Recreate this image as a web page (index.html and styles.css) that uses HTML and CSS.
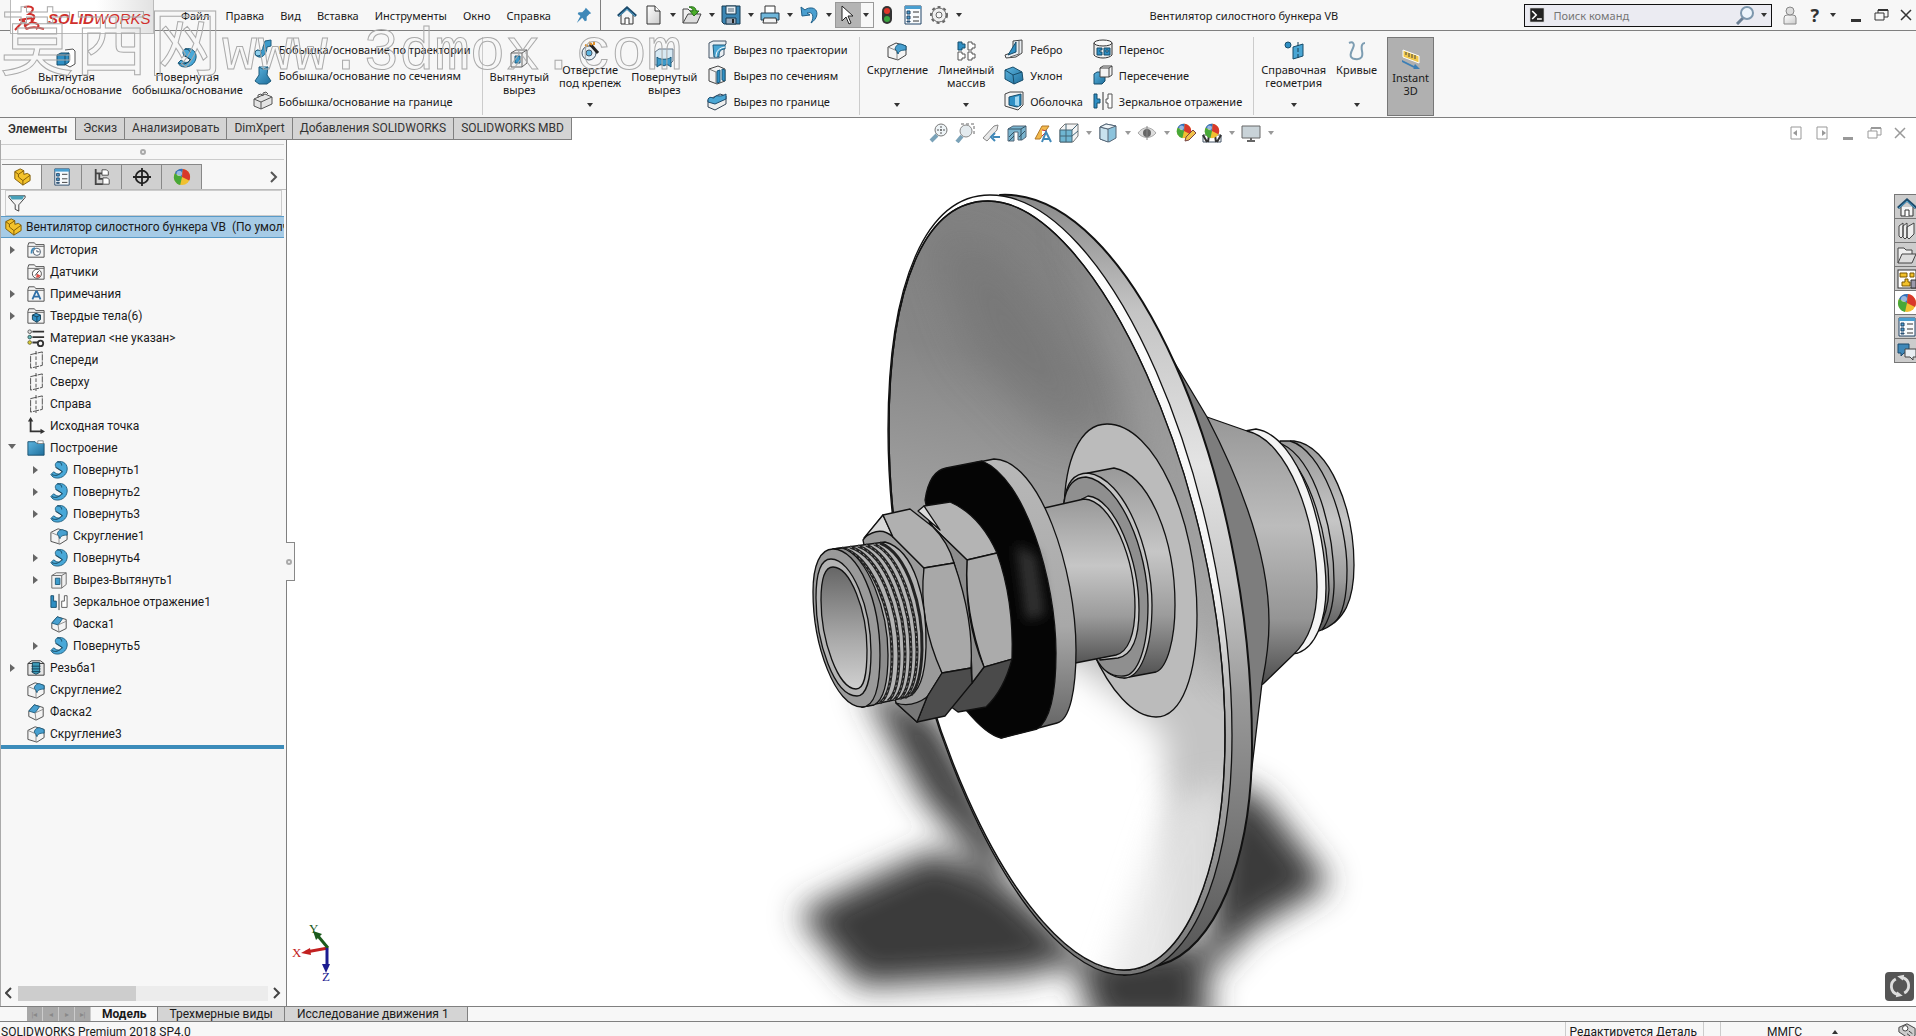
FILE: index.html
```html
<!DOCTYPE html>
<html lang="ru">
<head>
    <meta charset="UTF-8">
    <meta name="viewport" content="width=device-width, initial-scale=1.0">
    <title>Вентилятор силостного бункера VB</title>
    <link rel="stylesheet" href="styles.css">
</head>
<body>

    <!-- icon sprite -->
    <svg class="sprite" aria-hidden="true">
        <defs>
            <linearGradient id="blue" x1="0" y1="0" x2="1" y2="1"><stop offset="0" stop-color="#5db5e0"/><stop offset="1" stop-color="#1f6f9c"/></linearGradient>
            <linearGradient id="paper" x1="0" y1="0" x2="1" y2="1"><stop offset="0" stop-color="#fff"/><stop offset="1" stop-color="#ccc"/></linearGradient>
        </defs>
        <symbol id="i-extrude" viewBox="0 0 20 20"><path d="M9 2l8-1 2 2v13l-5 3-6-3" fill="#fff" stroke="#555"/><path d="M1 7l4-2h8v9l-4 3H1z" fill="#2f8fc4" stroke="#174d6b"/><path d="M1 7h8v10M9 7l4-2" fill="none" stroke="#174d6b"/></symbol>
        <symbol id="i-revolve" viewBox="0 0 20 20"><path d="M8 1c7-2 12 3 11 9-1 6-6 9-11 9-4 0-6-2-7-4l3-3 3 2c3 1 7 0 6-3l-6-4C5 5 6 2 8 1z" fill="#48a8d8" stroke="#1d5b7c"/><path d="M6 7l8 5M2 15c4 2 8 1 11-3M8 1c4 0 5 2 5 4" fill="none" stroke="#143e55"/></symbol>
        <symbol id="i-sweep" viewBox="0 0 20 20"><path d="M12 2l6-1v6l-4 1c0 6-4 11-8 10-5-1-5-6-1-7 1 2 5 1 5-3z" fill="#3d9bcb" stroke="#1d5b7c"/><circle cx="5" cy="14" r="3" fill="#8fd0ee" stroke="#1d5b7c"/></symbol>
        <symbol id="i-loft" viewBox="0 0 20 20"><path d="M6 2h9l-1 8 4 6-4 3H6l-4-3 4-6z" fill="url(#blue)" stroke="#1d5b7c"/><path d="M6 2l4 2 5-2" fill="#8fd0ee" stroke="#1d5b7c"/></symbol>
        <symbol id="i-brick" viewBox="0 0 20 20"><path d="M1 8l11-5 7 3v7L8 18l-7-3z" fill="#e4e4e4" stroke="#555"/><path d="M1 8l7 3 11-5M8 11v7M5 7V4l3-1 2 2M10 5V2l3-1 2 2" fill="none" stroke="#555"/></symbol>
        <symbol id="i-cut" viewBox="0 0 20 20"><path d="M2 5l5-3h11v13l-5 4H2z" fill="#f0f0f0" stroke="#666"/><path d="M2 5h11v14M13 5l5-3" fill="none" stroke="#666"/><path d="M6 8h5v7H6z" fill="#3d9bcb" stroke="#1d5b7c"/></symbol>
        <symbol id="i-hole" viewBox="0 0 20 20"><circle cx="9" cy="12" r="7" fill="#e4eef5" stroke="#456"/><circle cx="9" cy="12" r="3" fill="#5db5e0" stroke="#456"/><path d="M10 3l8 9" stroke="#222" stroke-width="3"/><path d="M9 1l3 3M5 4l3 1M14 1v3" stroke="#e0902a" stroke-width="2"/></symbol>
        <symbol id="i-rcut" viewBox="0 0 20 20"><path d="M1 4l4-3h14v12l-4 4H1z" fill="#d7e9f3" stroke="#678"/><path d="M3 19V9c2 3 12 3 14 0v10l-4-3-3 2-3-2z" fill="#3d9bcb" stroke="#1d5b7c"/></symbol>
        <symbol id="i-scut" viewBox="0 0 20 20"><path d="M2 4l4-2h13v3l-2 2v9l-5 3H2z" fill="#e9eef2" stroke="#456"/><path d="M6 6h12v4c-5 0-6 3-6 8H7z" fill="#4aa6d4" stroke="#1d5b7c"/><path d="M9 18c0-6 3-9 9-10" fill="none" stroke="#fff"/></symbol>
        <symbol id="i-lcut" viewBox="0 0 20 20"><path d="M2 4l9-3 7 3v12l-8 3-8-3z" fill="#f2f2f2" stroke="#444"/><path d="M2 4l7 3v12" fill="none" stroke="#777"/><path d="M10 6l3-1v12l-3 1zM15 4l3 1v11l-3-1z" fill="#2f8fc4" stroke="#1d5b7c"/></symbol>
        <symbol id="i-bcut" viewBox="0 0 20 20"><path d="M1 9l12-6 6 2v8l-11 6-7-3z" fill="#eee" stroke="#345"/><path d="M1 8c3-4 5 1 7-2s5 1 11-3v5L8 13l-7-2z" fill="#4aa6d4" stroke="#1d4b6c"/></symbol>
        <symbol id="i-fillet" viewBox="0 0 20 20"><path d="M1 6l8-4 10 3v9l-8 5-10-3z" fill="#f4f4f4" stroke="#444"/><path d="M1 6l7 3q2 1 2 4v6" fill="none" stroke="#888"/><path d="M8 8c1-4 3-5 6-5l5 2v4c-5 0-7 1-8 4q-1-4-3-5z" fill="#48a0d0" stroke="#1d5b7c"/></symbol>
        <symbol id="i-chamfer" viewBox="0 0 20 20"><path d="M2 9l6-7 10 3v10l-8 4-8-4z" fill="#f4f4f4" stroke="#444"/><path d="M2 9l6-7 6 2-5 7z" fill="#48a0d0" stroke="#1d5b7c"/><path d="M9 11l1 8M9 11l9-4" fill="none" stroke="#888"/></symbol>
        <symbol id="i-pattern" viewBox="0 0 20 20"><path d="M2 1h4v2h3v4H6v2H2z" fill="#2f8fc4" stroke="#174d6b"/><path d="M12 1h4v2h3v4h-3v2h-4zM2 11h4v2h3v4H6v2H2zM12 11h4v2h3v4h-3v2h-4z" fill="#fff" stroke="#555"/></symbol>
        <symbol id="i-rib" viewBox="0 0 20 20"><path d="M9 2l9-1v13l-6 4-10 1-1-3 8-3z" fill="#e9eef2" stroke="#444"/><path d="M12 3v10l-8 3z" fill="#2f8fc4" stroke="#174d6b"/><path d="M15 2v13l-9 3" fill="none" stroke="#666"/></symbol>
        <symbol id="i-draft" viewBox="0 0 20 20"><path d="M1 5l8-3 9 5 1 8-9 4-9-5z" fill="url(#blue)" stroke="#174d6b"/><path d="M1 5l8 5 9-3M9 10l1 9" fill="none" stroke="#174d6b"/></symbol>
        <symbol id="i-shell" viewBox="0 0 20 20"><path d="M1 3l5-2h13v13l-5 5-13-4z" fill="#f2f2f2" stroke="#444"/><path d="M5 6l12-3v11l-4 2-8-2z" fill="#2f8fc4" stroke="#174d6b"/><path d="M11 6v8l4 1V5z" fill="#9fd6f0"/></symbol>
        <symbol id="i-wrap" viewBox="0 0 20 20"><path d="M1 4v12c3 4 15 4 18 0V4" fill="#eee" stroke="#333"/><ellipse cx="10" cy="4" rx="9" ry="3" fill="#f8f8f8" stroke="#333"/><path d="M4 9h5v2H7v2h2v3H4zM11 9h6v7h-6zM13 11h2v2h-2z" fill="#2f8fc4" stroke="#174d6b" fill-rule="evenodd"/></symbol>
        <symbol id="i-cross" viewBox="0 0 20 20"><path d="M1 9l3-2h8v9l-3 3H1z" fill="url(#blue)" stroke="#174d6b"/><path d="M7 3l3-2h9v9l-3 2H7z" fill="#f4f4f4" stroke="#444"/><path d="M7 3h9v9M16 3l3-2" fill="none" stroke="#444"/></symbol>
        <symbol id="i-mirror" viewBox="0 0 20 20"><path d="M1 3h3v5h3v4H4v5H1z" fill="#2f8fc4" stroke="#174d6b"/><path d="M10 1v18" stroke="#333"/><path d="M19 3h-4v5h-2v4h2v5h4z" fill="#fff" stroke="#555"/></symbol>
        <symbol id="i-mirror2" viewBox="0 0 20 20"><path d="M1 3h3v6h3v7H1z" fill="#2f8fc4" stroke="#174d6b"/><path d="M10 1v18" stroke="#333"/><path d="M19 3h-3v6h-3v7h6z" fill="#fff" stroke="#555"/></symbol>
        <symbol id="i-refgeo" viewBox="0 0 20 20"><circle cx="4" cy="4" r="3" fill="#2f8fc4" stroke="#174d6b"/><path d="M9 6l10-3v12L9 18z" fill="#4aa6d4" stroke="#174d6b"/><path d="M14 1v18" stroke="#143e55" stroke-dasharray="4 2"/></symbol>
        <symbol id="i-curves" viewBox="0 0 20 20"><path d="M2 2c4-2 6 1 4 5s-5 10 2 11 8-3 7-8 0-8 3-8" fill="none" stroke="#7d9db2" stroke-width="2"/></symbol>
        <symbol id="i-instant" viewBox="0 0 20 20"><path d="M2 1l16 6v7L2 8z" fill="#f1c84b" stroke="#fff"/><path d="M5 3v3M8 4v4M11 5v4M14 6v4" stroke="#444"/><path d="M1 11l12 6 1-2 5 5-7 0 1-1L1 13z" fill="#3d7fb5"/></symbol>
        <symbol id="i-home" viewBox="0 0 20 20"><path d="M4 10v9h12v-9" fill="#f4f4f4" stroke="#333"/><path d="M1 11l9-8 9 8" fill="none" stroke="#1d4b6c" stroke-width="3"/><path d="M2 11l8-7 8 7" fill="none" stroke="#58a9d2"/><path d="M8 19v-6h4v6" fill="#fff" stroke="#333"/></symbol>
        <symbol id="i-new" viewBox="0 0 20 20"><path d="M4 1h8l5 5v13H4z" fill="url(#paper)" stroke="#333"/><path d="M12 1v5h5" fill="#fff" stroke="#333"/></symbol>
        <symbol id="i-open" viewBox="0 0 20 20"><path d="M1 18V4h5l2 2h7v4" fill="#f0f0f0" stroke="#444"/><path d="M1 18l5-9h13l-4 9z" fill="#ddd" stroke="#444"/><path d="M7 2c5-1 7 1 7 4h3l-5 5-4-5h3c0-2-1-3-4-4z" fill="#4caf2a" stroke="#27701a"/></symbol>
        <symbol id="i-save" viewBox="0 0 20 20"><path d="M1 1h18v18H3l-2-2z" fill="#3b86b4" stroke="#183b50"/><path d="M5 1h10v8H5z" fill="#e8f0f5" stroke="#183b50"/><path d="M7 4h6M7 6h6" stroke="#567"/><path d="M5 13h10v6H5z" fill="#9ab" stroke="#183b50"/><path d="M11 14h2v4h-2z" fill="#222"/></symbol>
        <symbol id="i-print" viewBox="0 0 20 20"><path d="M5 8V1h10v7" fill="#fff" stroke="#333"/><path d="M1 8h18v7H1z" fill="#6fb6da" stroke="#1d3b50"/><path d="M4 13h12l1 5H3z" fill="#f4f4f4" stroke="#333"/></symbol>
        <symbol id="i-undo" viewBox="0 0 20 20"><path d="M2 2l1 9 8-1-3-2c5-2 8 3 4 10 9-6 7-16-1-15-2 0-4 1-5 2z" fill="#4a9fd0" stroke="#1f5f88"/></symbol>
        <symbol id="i-cursor" viewBox="0 0 20 20"><path d="M6 1v15l4-4 3 7 2-1-3-7h5z" fill="#fff" stroke="#222"/></symbol>
        <symbol id="i-traffic" viewBox="0 0 20 20"><rect x="5" y="1" width="10" height="18" rx="5" fill="#333"/><circle cx="10" cy="6" r="3" fill="#e0342a"/><circle cx="10" cy="14" r="3" fill="#3aa640"/></symbol>
        <symbol id="i-list" viewBox="0 0 20 20"><path d="M2 1h16v18H2z" fill="#f8fbfd" stroke="#246"/><path d="M2 1h16v3H2z" fill="#4a9fd0"/><path d="M4 6h3v3H4zM4 11h3v3H4zM4 16h3v1H4z" fill="#4a9fd0" stroke="#246"/><path d="M10 7h6M10 12h6M10 16h6" stroke="#333"/></symbol>
        <symbol id="i-gear" viewBox="0 0 20 20"><circle cx="10" cy="10" r="8" fill="none" stroke="#666" stroke-width="2" stroke-dasharray="3 3"/><circle cx="10" cy="10" r="7" fill="#f0f0f0" stroke="#666"/><circle cx="10" cy="10" r="3" fill="#f7f7f7" stroke="#666"/></symbol>
        <symbol id="i-pin" viewBox="0 0 20 20"><path d="M12 2l6 6-2 1-3 3v4l-2 1-3-4-6 6 4-8-3-2 1-2h4l3-3z" fill="#3f88b8"/></symbol>
        <symbol id="i-part" viewBox="0 0 20 20"><path d="M2 4l6-3 4 2v4l4-1 3 2v6l-8 5-9-7z" fill="#f3c22b" stroke="#7a5600"/><path d="M2 4l4 3 6-4M6 7v3l5 4 8-6M11 14v5" fill="none" stroke="#7a5600"/></symbol>
        <symbol id="i-config" viewBox="0 0 20 20"><path d="M3 1v17h8M3 6h7M7 6v6h4" fill="none" stroke="#444" stroke-width="2"/><path d="M10 2h5l2 2v4h-7zM11 11h5l2 2v5h-7z" fill="#fff" stroke="#444"/></symbol>
        <symbol id="i-target" viewBox="0 0 20 20"><circle cx="10" cy="10" r="7" fill="none" stroke="#222" stroke-width="2"/><path d="M10 0v20M0 10h20" stroke="#222" stroke-width="2"/></symbol>
        <symbol id="i-ball" viewBox="0 0 20 20"><circle cx="10" cy="10" r="9" fill="#f0c030"/><path d="M10 10L2 6a9 9 0 0 1 9-5z" fill="#2f6fc0"/><path d="M10 10L11 1a9 9 0 0 1 7 13z" fill="#d8382c"/><path d="M10 10l-8-4a9 9 0 0 0 6 13z" fill="#48a838"/><circle cx="7" cy="6" r="3" fill="#fff" opacity=".5"/></symbol>
        <symbol id="i-funnel" viewBox="0 0 20 20"><path d="M1 2h18v2l-7 8v7l-4-2v-5L1 4z" fill="#f4f4f4" stroke="#333"/><path d="M2 2h16l-2 4H4z" fill="#48a0b8"/></symbol>
        <symbol id="i-folder" viewBox="0 0 20 20"><path d="M1 18V5l1-3h6l2 2h9v14z" fill="#f4f4f4" stroke="#444"/><path d="M1 6h18" stroke="#666"/></symbol>
        <symbol id="i-history" viewBox="0 0 20 20"><use href="#i-folder"/><circle cx="11" cy="12" r="4" fill="#fff" stroke="#456"/><path d="M11 10v2h3" fill="none" stroke="#456"/><path d="M5 14c0-4 2-6 4-6" fill="none" stroke="#3f88b8" stroke-width="2"/></symbol>
        <symbol id="i-sensor" viewBox="0 0 20 20"><use href="#i-folder"/><circle cx="11" cy="12" r="5" fill="#fff" stroke="#444"/><path d="M11 12l4 2-2 2-3 0z" fill="#e05048"/><path d="M9 14l4-5" stroke="#222"/></symbol>
        <symbol id="i-notes" viewBox="0 0 20 20"><use href="#i-folder"/><path d="M6 16l4-9h1l4 9M8 13h6" fill="none" stroke="#2f6fa8" stroke-width="2"/></symbol>
        <symbol id="i-bodies" viewBox="0 0 20 20"><use href="#i-folder"/><path d="M6 9l4-2 5 2v5l-4 3-5-3z" fill="#2f8fc4" stroke="#143e55"/><path d="M6 9l5 2 4-2M11 11v6" fill="none" stroke="#143e55"/></symbol>
        <symbol id="i-material" viewBox="0 0 20 20"><path d="M6 3h13M6 9h13M6 15h6" stroke="#333" stroke-width="2"/><circle cx="3" cy="3" r="2" fill="#ddd" stroke="#555"/><circle cx="3" cy="9" r="2" fill="#6bb" stroke="#355"/><circle cx="3" cy="15" r="2" fill="#dc3" stroke="#663"/><circle cx="15" cy="16" r="3" fill="none" stroke="#333" stroke-width="2"/></symbol>
        <symbol id="i-plane" viewBox="0 0 20 20"><path d="M4 4l13-3v15L4 19z" fill="none" stroke="#444" stroke-dasharray="7 1"/><path d="M10 0v20" stroke="#444" stroke-dasharray="4 2"/></symbol>
        <symbol id="i-origin" viewBox="0 0 20 20"><path d="M4 4v12h12" fill="none" stroke="#333" stroke-width="2"/><path d="M1 5l3-5 3 5zM15 13l5 3-5 3z" fill="#333"/></symbol>
        <symbol id="i-bfolder" viewBox="0 0 20 20"><path d="M1 18V3h8l2 2h8v13z" fill="url(#blue)" stroke="#174d6b"/><path d="M12 2h6v3h-6z" fill="#fff" stroke="#888"/></symbol>
        <symbol id="i-thread" viewBox="0 0 20 20"><path d="M1 5l4-3h10l4 3v13H1z" fill="#e6e6e6" stroke="#333"/><path d="M1 5h18" stroke="#333"/><path d="M6 4h8v11l-4 2-4-2z" fill="#3d9bb8" stroke="#143e55"/><path d="M5 8h10M5 11h10M5 14h10" stroke="#143e55"/></symbol>
        <symbol id="i-zoomfit" viewBox="0 0 20 20"><path d="M2 18l6-6" stroke="#7aa2b8" stroke-width="4"/><circle cx="12" cy="7" r="6" fill="#eef4f7" stroke="#777"/><path d="M12 3v8M8 7h8" stroke="#555" stroke-dasharray="2 1"/></symbol>
        <symbol id="i-zoomarea" viewBox="0 0 20 20"><path d="M6 1h13v12" fill="none" stroke="#666" stroke-dasharray="3 2"/><path d="M2 19l5-6" stroke="#7aa2b8" stroke-width="4"/><circle cx="11" cy="8" r="6" fill="#e3eaee" stroke="#888"/></symbol>
        <symbol id="i-prev" viewBox="0 0 20 20"><path d="M2 15L13 3l4-1-1 5L6 18z" fill="#e8e8e8" stroke="#888"/><path d="M19 14h-7M14 10l-4 4 4 4" fill="none" stroke="#3f88b8" stroke-width="2"/></symbol>
        <symbol id="i-section" viewBox="0 0 20 20"><path d="M1 6l5-3h13v11l-4 3h-4V9H7v9H1z" fill="#7ab5d0" stroke="#567"/><path d="M1 6h13v11M14 6l5-3" fill="none" stroke="#356"/><path d="M2 14l5-5M2 18l5-5M12 14l6-6" stroke="#356"/></symbol>
        <symbol id="i-dyn" viewBox="0 0 20 20"><path d="M2 16L9 3h7L7 16z" fill="#f3b94c" stroke="#b0792a"/><path d="M9 7l5 1-5 5" fill="#fff" stroke="#c33"/><path d="M9 19l4-10 5 10M11 16h6" fill="none" stroke="#3f88b8" stroke-width="2"/></symbol>
        <symbol id="i-orient" viewBox="0 0 20 20"><path d="M1 6l5-5h13v12l-5 6H1z" fill="#f4f4f4" stroke="#777"/><path d="M1 7h12v12H1z" fill="#6fb6d2" stroke="#467"/><path d="M13 7l6-6M7 1v18M1 13h12l6-5" fill="none" stroke="#467"/></symbol>
        <symbol id="i-style" viewBox="0 0 20 20"><path d="M2 4l6-3 10 2v12l-7 4-9-3z" fill="#8cc3dc" stroke="#567"/><path d="M2 4l8 2v13l-8-3z" fill="#c8e2ee" stroke="#567"/><path d="M2 4l6-3 10 2-8 3z" fill="#eef5f8" stroke="#567"/></symbol>
        <symbol id="i-eye" viewBox="0 0 20 20"><path d="M1 10c5-7 13-7 18 0-5 6-13 6-18 0z" fill="#ddd" stroke="#aaa"/><circle cx="10" cy="10" r="4" fill="#666"/><path d="M10 3v14" stroke="#888"/></symbol>
        <symbol id="i-appear" viewBox="0 0 20 20"><g transform="scale(.8)"><use href="#i-ball" width="20" height="20"/></g><path d="M9 18l1-4 7-7 3 3-7 7z" fill="#f0c24a" stroke="#744"/></symbol>
        <symbol id="i-scene" viewBox="0 0 20 20"><path d="M1 12h18v7H1z" fill="#fff" stroke="#456"/><path d="M1 12l4 7M7 12l-1 7M13 12l1 7M19 12l-4 7" stroke="#333" stroke-width="2"/><g transform="translate(2) scale(.8)"><use href="#i-ball" width="20" height="20"/></g></symbol>
        <symbol id="i-screen" viewBox="0 0 20 20"><path d="M1 3h18v12H1z" fill="#c9d3d8" stroke="#666"/><path d="M10 15v3M6 18h8" stroke="#666" stroke-width="2"/></symbol>
        <symbol id="i-books" viewBox="0 0 20 20"><path d="M2 5l4-3v13l-2 2-2-2zM6 5l4-3v14l-2 2-2-2zM10 6l7-4v11l-5 5-2-2z" fill="#eee" stroke="#444"/></symbol>
        <symbol id="i-dir" viewBox="0 0 20 20"><path d="M1 18V3h6l2 2h6v4" fill="#f0f0f0" stroke="#444"/><path d="M1 18l4-9h14l-4 9z" fill="#ddd" stroke="#444"/></symbol>
        <symbol id="i-palette" viewBox="0 0 20 20"><rect x="1" y="1" width="18" height="18" fill="#fff" stroke="#333"/><path d="M3 4h7v4H3zM13 4h4v4h-4zM5 13h3v-3h3v3h2v4H5z" fill="#f3c22b" stroke="#7a5600"/><path d="M14 11h5v8h-5z" fill="#99a" stroke="#333"/></symbol>
        <symbol id="i-chat" viewBox="0 0 20 20"><path d="M1 3h11v9H7l-3 3v-3H1z" fill="#3f88b8" stroke="#1d4b6c"/><path d="M8 8h11v8h-3v3l-3-3H8z" fill="#e8eef2" stroke="#444"/></symbol>
        <symbol id="i-user" viewBox="0 0 20 20"><path d="M4 19v-6q0-3 3-3h6q3 0 3 3v6z" fill="url(#paper)" stroke="#888"/><circle cx="10" cy="6" r="4" fill="#ddd" stroke="#888"/></symbol>
        <symbol id="i-prompt" viewBox="0 0 20 20"><path d="M1 1h18v18H1z" fill="#222" stroke="#fff"/><path d="M4 5l5 5-5 5M10 15h6" fill="none" stroke="#fff" stroke-width="2"/></symbol>
        <symbol id="i-mag" viewBox="0 0 20 20"><path d="M2 19l6-6" stroke="#6b7f94" stroke-width="3"/><circle cx="12" cy="8" r="6" fill="#edf4fb" stroke="#7d97ad" stroke-width="2"/></symbol>
        <symbol id="i-min" viewBox="0 0 20 20"><path d="M5 14h10v3H5z" fill="currentColor"/></symbol>
        <symbol id="i-restore" viewBox="0 0 20 20"><path d="M7 8V5h10v7h-4M4 8h9v7H4z" fill="none" stroke="currentColor" stroke-width="1"/><path d="M7 5h10" stroke="currentColor" stroke-width="2"/></symbol>
        <symbol id="i-close" viewBox="0 0 20 20"><path d="M5 5l10 10M15 5L5 15" stroke="currentColor" stroke-width="1.5"/></symbol>
        <symbol id="i-padl" viewBox="0 0 20 20"><path d="M5 4h10v12H5z" fill="none" stroke="currentColor"/><path d="M11 7v6l-4-3z" fill="currentColor"/></symbol>
        <symbol id="i-padr" viewBox="0 0 20 20"><path d="M5 4h10v12H5z" fill="none" stroke="currentColor"/><path d="M10 7v6l4-3z" fill="currentColor"/></symbol>
        <symbol id="i-rotate" viewBox="0 0 20 20"><path d="M12 4a6 6 0 0 1 1 11M8 16A6 6 0 0 1 7 5" fill="none" stroke="#ddd" stroke-width="2"/><path d="M8 3l5-1-1 4zM12 17l-5 1 1-4z" fill="#ddd"/></symbol>
        <symbol id="i-chip" viewBox="0 0 20 20"><path d="M1 6l9-4 9 5v8l-6 4-12-8z" fill="#ccc" stroke="#333"/><circle cx="8" cy="7" r="3" fill="#fff" stroke="#333"/><path d="M12 10l4 3M10 13l4 3" stroke="#333"/></symbol>
    </svg>

    <header class="titlebar">
        <a class="logo" href="#" aria-label="SOLIDWORKS">
            <svg class="logo-mark" viewBox="0 0 34 28"><path d="M10 2c9-2 12 2 5 7 9 0 6 8-5 12M1 25l9-10 2 9M5 15l13-2M12 24c6-3 12-2 18 0M21 13c-5 1-4 4 0 5s5 4 1 6" fill="none" stroke="#d0302c" stroke-width="2"/></svg>
            <b>SOLID</b><span>WORKS</span>
        </a>
        <nav class="menu">
            <a href="#">Файл</a>
            <a href="#">Правка</a>
            <a href="#">Вид</a>
            <a href="#">Вставка</a>
            <a href="#">Инструменты</a>
            <a href="#">Окно</a>
            <a href="#">Справка</a>
        </nav>
        <button class="pin" aria-label="Закрепить"><svg class="icon small"><use href="#i-pin"/></svg></button>
        <div class="quick">
            <button aria-label="Домой"><svg class="icon"><use href="#i-home"/></svg></button>
            <button aria-label="Создать"><svg class="icon"><use href="#i-new"/></svg><i class="caret"></i></button>
            <button aria-label="Открыть"><svg class="icon"><use href="#i-open"/></svg><i class="caret"></i></button>
            <button aria-label="Сохранить"><svg class="icon"><use href="#i-save"/></svg><i class="caret"></i></button>
            <button aria-label="Печать"><svg class="icon"><use href="#i-print"/></svg><i class="caret"></i></button>
            <button aria-label="Отменить"><svg class="icon"><use href="#i-undo"/></svg><i class="caret"></i></button>
            <button class="picked" aria-label="Выбрать"><svg class="icon"><use href="#i-cursor"/></svg><i class="caret"></i></button>
            <button aria-label="Перестроить"><svg class="icon"><use href="#i-traffic"/></svg></button>
            <button aria-label="Свойства файла"><svg class="icon"><use href="#i-list"/></svg></button>
            <button aria-label="Параметры"><svg class="icon"><use href="#i-gear"/></svg><i class="caret"></i></button>
        </div>
        <h1 class="doc-title">Вентилятор силостного бункера VB</h1>
        <div class="title-right">
            <label class="search">
                <svg class="icon tiny"><use href="#i-prompt"/></svg>
                <input type="text" placeholder="Поиск команд" aria-label="Поиск команд">
                <svg class="icon"><use href="#i-mag"/></svg>
                <i class="caret"></i>
            </label>
            <button aria-label="Вход"><svg class="icon"><use href="#i-user"/></svg></button>
            <button class="help" aria-label="Помощь">?<i class="caret"></i></button>
            <button aria-label="Свернуть"><svg class="icon"><use href="#i-min"/></svg></button>
            <button aria-label="Развернуть"><svg class="icon"><use href="#i-restore"/></svg></button>
            <button aria-label="Закрыть"><svg class="icon"><use href="#i-close"/></svg></button>
        </div>
    </header>

    <div class="ribbon">
        <button class="big low"><svg class="icon"><use href="#i-extrude"/></svg><span>Вытянутая<br>бобышка/основание</span></button>
        <button class="big low"><svg class="icon"><use href="#i-revolve"/></svg><span>Повернутая<br>бобышка/основание</span></button>
        <div class="stack">
            <button><svg class="icon"><use href="#i-sweep"/></svg>Бобышка/основание по траектории</button>
            <button><svg class="icon"><use href="#i-loft"/></svg>Бобышка/основание по сечениям</button>
            <button><svg class="icon"><use href="#i-brick"/></svg>Бобышка/основание на границе</button>
        </div>
        <hr>
        <button class="big low"><svg class="icon"><use href="#i-cut"/></svg><span>Вытянутый<br>вырез</span></button>
        <button class="big"><svg class="icon"><use href="#i-hole"/></svg><span>Отверстие<br>под крепеж</span><i class="caret"></i></button>
        <button class="big low"><svg class="icon"><use href="#i-rcut"/></svg><span>Повернутый<br>вырез</span></button>
        <div class="stack">
            <button><svg class="icon"><use href="#i-scut"/></svg>Вырез по траектории</button>
            <button><svg class="icon"><use href="#i-lcut"/></svg>Вырез по сечениям</button>
            <button><svg class="icon"><use href="#i-bcut"/></svg>Вырез по границе</button>
        </div>
        <hr>
        <button class="big"><svg class="icon"><use href="#i-fillet"/></svg><span>Скругление</span><i class="caret"></i></button>
        <button class="big"><svg class="icon"><use href="#i-pattern"/></svg><span>Линейный<br>массив</span><i class="caret"></i></button>
        <div class="stack">
            <button><svg class="icon"><use href="#i-rib"/></svg>Ребро</button>
            <button><svg class="icon"><use href="#i-draft"/></svg>Уклон</button>
            <button><svg class="icon"><use href="#i-shell"/></svg>Оболочка</button>
        </div>
        <div class="stack">
            <button><svg class="icon"><use href="#i-wrap"/></svg>Перенос</button>
            <button><svg class="icon"><use href="#i-cross"/></svg>Пересечение</button>
            <button><svg class="icon"><use href="#i-mirror"/></svg>Зеркальное отражение</button>
        </div>
        <hr>
        <button class="big"><svg class="icon"><use href="#i-refgeo"/></svg><span>Справочная<br>геометрия</span><i class="caret"></i></button>
        <button class="big"><svg class="icon"><use href="#i-curves"/></svg><span>Кривые</span><i class="caret"></i></button>
        <button class="big low pressed"><svg class="icon"><use href="#i-instant"/></svg><span>Instant<br>3D</span></button>
    </div>

    <main class="workspace">
        <nav class="tabs">
            <button class="active">Элементы</button>
            <button>Эскиз</button>
            <button>Анализировать</button>
            <button>DimXpert</button>
            <button>Добавления SOLIDWORKS</button>
            <button>SOLIDWORKS MBD</button>
        </nav>

        <aside class="panel">
            <div class="grip"><i class="dot"></i></div>
            <div class="panel-tabs">
                <button class="active" aria-label="Дерево конструирования"><svg class="icon small"><use href="#i-part"/></svg></button>
                <button aria-label="PropertyManager"><svg class="icon small"><use href="#i-list"/></svg></button>
                <button aria-label="ConfigurationManager"><svg class="icon small"><use href="#i-config"/></svg></button>
                <button aria-label="DimXpertManager"><svg class="icon small"><use href="#i-target"/></svg></button>
                <button aria-label="DisplayManager"><svg class="icon small"><use href="#i-ball"/></svg></button>
                <button class="more" aria-label="Ещё"><svg viewBox="0 0 8 12" width="8" height="12"><path d="M1 1l5 5-5 5" fill="none" stroke="#555" stroke-width="2"/></svg></button>
            </div>
            <label class="filter"><svg class="icon small"><use href="#i-funnel"/></svg><input type="text" aria-label="Фильтр"></label>
            <div class="root"><svg class="icon small"><use href="#i-part"/></svg>Вентилятор силостного бункера VB&nbsp; (По умолчанию)</div>
            <ul class="tree">
                <li><i class="arrow"></i><svg class="icon small"><use href="#i-history"/></svg>История</li>
                <li><i></i><svg class="icon small"><use href="#i-sensor"/></svg>Датчики</li>
                <li><i class="arrow"></i><svg class="icon small"><use href="#i-notes"/></svg>Примечания</li>
                <li><i class="arrow"></i><svg class="icon small"><use href="#i-bodies"/></svg>Твердые тела(6)</li>
                <li><i></i><svg class="icon small"><use href="#i-material"/></svg>Материал &lt;не указан&gt;</li>
                <li><i></i><svg class="icon small"><use href="#i-plane"/></svg>Спереди</li>
                <li><i></i><svg class="icon small"><use href="#i-plane"/></svg>Сверху</li>
                <li><i></i><svg class="icon small"><use href="#i-plane"/></svg>Справа</li>
                <li><i></i><svg class="icon small"><use href="#i-origin"/></svg>Исходная точка</li>
                <li><i class="arrow open"></i><svg class="icon small"><use href="#i-bfolder"/></svg>Построение</li>
                <li class="sub"><i class="arrow"></i><svg class="icon small"><use href="#i-revolve"/></svg>Повернуть1</li>
                <li class="sub"><i class="arrow"></i><svg class="icon small"><use href="#i-revolve"/></svg>Повернуть2</li>
                <li class="sub"><i class="arrow"></i><svg class="icon small"><use href="#i-revolve"/></svg>Повернуть3</li>
                <li class="sub"><i></i><svg class="icon small"><use href="#i-fillet"/></svg>Скругление1</li>
                <li class="sub"><i class="arrow"></i><svg class="icon small"><use href="#i-revolve"/></svg>Повернуть4</li>
                <li class="sub"><i class="arrow"></i><svg class="icon small"><use href="#i-cut"/></svg>Вырез-Вытянуть1</li>
                <li class="sub"><i></i><svg class="icon small"><use href="#i-mirror2"/></svg>Зеркальное отражение1</li>
                <li class="sub"><i></i><svg class="icon small"><use href="#i-chamfer"/></svg>Фаска1</li>
                <li class="sub"><i class="arrow"></i><svg class="icon small"><use href="#i-revolve"/></svg>Повернуть5</li>
                <li><i class="arrow"></i><svg class="icon small"><use href="#i-thread"/></svg>Резьба1</li>
                <li><i></i><svg class="icon small"><use href="#i-fillet"/></svg>Скругление2</li>
                <li><i></i><svg class="icon small"><use href="#i-chamfer"/></svg>Фаска2</li>
                <li><i></i><svg class="icon small"><use href="#i-fillet"/></svg>Скругление3</li>
            </ul>
            <div class="rollback"></div>
            <div class="hscroll">
                <svg viewBox="0 0 8 12" width="8" height="12"><path d="M6 1L1 6l5 5" fill="none" stroke="#444" stroke-width="2"/></svg>
                <div class="track"><div class="thumb"></div></div>
                <svg viewBox="0 0 8 12" width="8" height="12"><path d="M1 1l5 5-5 5" fill="none" stroke="#444" stroke-width="2"/></svg>
            </div>
        </aside>

        <section class="viewport">
            <svg class="model" viewBox="287 118 1629 888" role="img" aria-label="Модель вентилятора">
                <defs>
                    <linearGradient id="face" gradientUnits="userSpaceOnUse" x1="1030" y1="200" x2="940" y2="650"><stop offset="0" stop-color="#828282"/><stop offset=".35" stop-color="#868686"/><stop offset=".7" stop-color="#a0a0a0"/><stop offset="1" stop-color="#c4c4c4"/></linearGradient>
                    <linearGradient id="rim" gradientUnits="userSpaceOnUse" x1="0" y1="195" x2="0" y2="970"><stop offset="0" stop-color="#888"/><stop offset=".15" stop-color="#c4c4c4"/><stop offset=".35" stop-color="#e4e4e4"/><stop offset=".5" stop-color="#c8c8c8"/><stop offset=".65" stop-color="#999"/><stop offset="1" stop-color="#555"/></linearGradient>
                    <linearGradient id="edge" gradientUnits="userSpaceOnUse" x1="0" y1="195" x2="0" y2="975"><stop offset="0" stop-color="#fff"/><stop offset=".5" stop-color="#f4f4f4"/><stop offset=".65" stop-color="#b4b4b4"/><stop offset="1" stop-color="#777"/></linearGradient>
                    <linearGradient id="cyl" x1="0" y1="0" x2="0" y2="1"><stop offset="0" stop-color="#999"/><stop offset=".4" stop-color="#c6c6c6"/><stop offset=".7" stop-color="#9c9c9c"/><stop offset="1" stop-color="#505050"/></linearGradient>
                    <linearGradient id="washer" x1="0" y1="0" x2="0" y2="1"><stop offset="0" stop-color="#b8b8b8"/><stop offset=".6" stop-color="#a8a8a8"/><stop offset="1" stop-color="#606060"/></linearGradient>
                    <linearGradient id="bore" x1="0" y1="0" x2="0" y2="1"><stop offset="0" stop-color="#666"/><stop offset=".6" stop-color="#aaa"/><stop offset="1" stop-color="#d0d0d0"/></linearGradient>
                    <linearGradient id="cone" gradientUnits="userSpaceOnUse" x1="0" y1="420" x2="0" y2="685"><stop offset="0" stop-color="#989898"/><stop offset=".4" stop-color="#bcbcbc"/><stop offset=".75" stop-color="#959595"/><stop offset="1" stop-color="#4c4c4c"/></linearGradient>
                    <filter id="soft" x="-30%" y="-30%" width="160%" height="160%"><feGaussianBlur stdDeviation="16"/></filter>
                    <filter id="softer" x="-40%" y="-40%" width="180%" height="180%"><feGaussianBlur stdDeviation="24"/></filter>
                    <filter id="glow" x="-100%" y="-30%" width="300%" height="160%"><feGaussianBlur stdDeviation="6"/></filter>
                    <clipPath id="disc"><path d="M988 201C1095 201 1225 485 1225 735C1225 870 1185 970 1124 970C1020 970 889 690 889 430C889 285 925 201 988 201Z"/></clipPath>
                </defs>

                <!-- floor shadow -->
                <g fill="#3a3a3a" filter="url(#soft)">
                    <path d="M860 680L935 715L1015 860L990 872L925 800Z"/>
                    <path d="M798 913L868 880L935 850L1010 885L1090 960L1020 976L860 986Z"/>
                    <path d="M1075 955L1200 940L1212 1030L1095 1030Z"/>
                    <path d="M1220 780L1260 795L1330 884L1250 930L1205 980Z"/>
                </g>

                <g stroke="#111" stroke-width="1.3" stroke-linejoin="round">
                    <!-- rear collar -->
                    <path d="M1280 441L1294 441C1330 445 1354 510 1354 565C1354 600 1345 622 1319 631L1290 640Z" fill="url(#cyl)"/>
                    <path d="M1290 441C1322 450 1347 520 1347 570C1347 600 1342 616 1334 623M1282 444C1315 460 1335 530 1334 587C1333 610 1328 622 1322 630M1278 447C1312 470 1329 540 1329 590Q1328 612 1318 630" fill="none"/>
                    <path d="M1245 431L1256 429C1300 436 1326 530 1326 588C1326 622 1315 647 1298 653L1285 655Z" fill="#f4f4f4"/>
                    <path d="M1207 417L1247 431C1288 440 1317 520 1317 587C1317 620 1307 642 1293 655L1263 684L1230 700Z" fill="url(#cone)"/>
                    <path d="M1150 330L1158 335L1207 417C1245 490 1269 560 1269 622C1269 650 1265 668 1262 683L1250 784L1200 800Z" fill="#7d7d7d"/>

                    <!-- disc -->
                    <path d="M1000 195C1130 188 1252 468 1252 745C1252 860 1215 950 1160 965L1124 975Z" fill="url(#rim)" stroke-width="2"/>
                    <path d="M990 195C1110 195 1232 485 1232 735C1232 875 1190 975 1124 975C1020 975 888 690 888 430C888 280 927 195 990 195Z" fill="url(#edge)"/>
                    <path d="M988 201C1095 201 1225 485 1225 735C1225 870 1185 970 1124 970C1020 970 889 690 889 430C889 285 925 201 988 201Z" fill="url(#face)"/>
                    <g clip-path="url(#disc)" stroke="none">
                        <path d="M930 230L1000 250L1060 330L1120 440L1050 430L970 350Z" fill="#707070" opacity=".6" filter="url(#softer)"/>
                        <path d="M1060 210L1240 500L1240 700L1190 620L1120 370Z" fill="#a2a2a2" opacity=".7" filter="url(#soft)"/>
                        <path d="M860 710L1060 655L1110 690L1165 735L1165 1000L860 1000Z" fill="#fff" filter="url(#soft)"/>
                        <path d="M900 730L1060 700L1160 800L1150 1000L1000 1000Z" fill="#fff" filter="url(#soft)"/>
                        <path d="M1170 800L1230 780L1220 1000L1100 1000Z" fill="#e4e4e4" opacity=".8" filter="url(#soft)"/>
                    </g>
                    <path d="M988 201C1095 201 1225 485 1225 735C1225 870 1185 970 1124 970C1020 970 889 690 889 430C889 285 925 201 988 201Z" fill="none"/>

                    <!-- hub plate and collar -->
                    <path d="M1107 424C1155 424 1197 520 1197 615C1197 675 1182 717 1156 717C1110 717 1064 610 1064 515C1064 460 1080 424 1107 424Z" fill="#bbb"/>
                    <path d="M1088 473L1114 468C1150 475 1175 540 1175 605C1175 640 1167 668 1156 672L1124 678Z" fill="url(#cyl)"/>
                    <path d="M1064 503C1066 482 1075 473 1088 473C1125 478 1152 550 1152 605C1152 650 1140 678 1124 678C1112 678 1102 670 1096 658Z" fill="#c4c4c4"/>
                    <path d="M1064 503C1066 485 1075 477 1086 477C1120 482 1148 550 1148 605C1148 650 1137 675 1124 676C1112 677 1102 670 1096 658Z" fill="#8f8f8f"/>
                    <path d="M1080 500L1088 496C1115 498 1139 560 1139 610C1139 640 1132 655 1118 658L1100 660Z" fill="#c8c8c8"/>
                    <path d="M1040 509L1084 499C1112 500 1135 560 1135 607C1135 635 1128 652 1116 655L1060 666Z" fill="url(#cyl)"/>

                    <!-- washer and gasket -->
                    <path d="M974 463L994 459C1040 460 1076 570 1076 650C1076 690 1070 720 1057 723L1001 738Z" fill="url(#washer)"/>
                    <path d="M925 500C928 480 935 470 946 468L982 461C1025 478 1056 580 1056 653C1056 700 1048 722 1037 729L1001 738C988 735 976 722 966 710Z" fill="#050505"/>
                    <path d="M1016 545L1036 555L1045 615L1026 620Z" fill="#333" stroke="none" filter="url(#glow)"/>

                    <!-- rear nut -->
                    <path d="M924 506L950 502Q980 515 997 553L967 560L933 527Z" fill="#b4b4b4"/>
                    <path d="M967 560L997 553Q1014 600 1012 659L984 667Q964 610 967 560Z" fill="#ababab"/>
                    <path d="M984 667L1012 659Q1004 690 986 707L958 712L950 706L972 683Z" fill="#4a4a4a"/>
                    <path d="M924 506L918 511L940 530Z" fill="#ddd"/>
                    <!-- front nut -->
                    <path d="M883 515L893 537L924 568L924 607L930 637L942 673L927 697L917 722L896 703L863 540Z" fill="#9a9a9a"/>
                    <path d="M883 515L864 538Q880 525 893 537Z" fill="#d8d8d8"/>
                    <path d="M933 527L967 560Q964 620 984 667L972 683Q972 620 954 563Q946 542 933 527Z" fill="#8c8c8c"/>
                    <path d="M883 515L910 509L933 527Q948 542 954 563L924 568L893 537Z" fill="#b0b0b0"/>
                    <path d="M924 568L954 563Q974 620 971 668L942 673Q918 620 924 568Z" fill="#a8a8a8"/>
                    <path d="M942 673L971 668L972 683L945 716L917 722L927 697Z" fill="#4c4c4c"/>
                    <path d="M896 703Q912 708 927 697L917 722Z" fill="#777"/>

                    <!-- threaded pipe -->
                    <path d="M833 549L885 542C915 550 927 600 926 647C925 680 918 694 907 697L862 707Z" fill="#b4b4b4"/>
                    <g fill="none" stroke="#222" stroke-width="3">
                        <path d="M842 548C872 556 892 610 892 655Q892 694 880 703"/>
                        <path d="M850 547C880 556 899 610 899 655Q899 692 888 701"/>
                        <path d="M858 546C887 556 905 610 905 653Q905 690 894 700"/>
                        <path d="M866 545C894 556 911 610 911 652Q911 688 900 699"/>
                        <path d="M874 544C901 556 917 610 917 650Q917 686 905 698"/>
                        <path d="M880 543C908 554 923 608 922 650Q921 684 911 695"/>
                    </g>
                    <g fill="none" stroke="#888" stroke-width="1" stroke-dasharray="2 3">
                        <path d="M842 548C872 556 892 610 892 655Q892 694 880 703"/>
                        <path d="M850 547C880 556 899 610 899 655Q899 692 888 701"/>
                        <path d="M858 546C887 556 905 610 905 653Q905 690 894 700"/>
                        <path d="M866 545C894 556 911 610 911 652Q911 688 900 699"/>
                        <path d="M874 544C901 556 917 610 917 650Q917 686 905 698"/>
                    </g>
                    <path d="M833 549L842 548C868 556 888 610 888 655Q888 698 874 705L862 707Z" fill="#8c8c8c"/>
                    <path d="M833 549C858 549 880 600 880 655C880 690 874 707 862 707C835 707 813 645 813 592C813 565 820 549 833 549Z" fill="#9a9a9a"/>
                    <path d="M831 559C852 559 871 608 871 652C871 680 866 696 857 696C834 696 816 642 816 598C816 572 821 559 831 559Z" fill="#b4b4b4"/>
                    <path d="M833 567C850 567 867 610 867 650C867 676 864 689 856 689C838 689 821 640 821 600C821 578 825 567 833 567Z" fill="url(#bore)"/>
                </g>

                <!-- orientation triad -->
                <g class="triad">
                    <path d="M328 948L306 952" stroke="#c22020" stroke-width="3"/><path d="M301 953l9-5 1 7z" fill="#c22020"/>
                    <path d="M328 948L318 936" stroke="#1c5a1c" stroke-width="3"/><path d="M313 931l9 3-6 6z" fill="#1c5a1c"/>
                    <path d="M327 948V966" stroke="#1c1c90" stroke-width="3"/><path d="M322 964h8l-4 9z" fill="#1c1c90"/>
                    <text x="292" y="957" fill="#c22020">X</text>
                    <text x="309" y="933" fill="#1c5a1c">Y</text>
                    <text x="322" y="981" fill="#1c1c90">Z</text>
                </g>
            </svg>

            <div class="view-tools">
                <button aria-label="Во весь экран"><svg class="icon"><use href="#i-zoomfit"/></svg></button>
                <button aria-label="Увеличить область"><svg class="icon"><use href="#i-zoomarea"/></svg></button>
                <button aria-label="Предыдущий вид"><svg class="icon"><use href="#i-prev"/></svg></button>
                <button aria-label="Разрез"><svg class="icon"><use href="#i-section"/></svg></button>
                <button aria-label="Динамические виды"><svg class="icon"><use href="#i-dyn"/></svg></button>
                <button aria-label="Ориентация"><svg class="icon"><use href="#i-orient"/></svg><i class="caret"></i></button>
                <button aria-label="Стиль отображения"><svg class="icon"><use href="#i-style"/></svg><i class="caret"></i></button>
                <button aria-label="Скрыть/отобразить"><svg class="icon"><use href="#i-eye"/></svg><i class="caret"></i></button>
                <button aria-label="Внешний вид"><svg class="icon"><use href="#i-appear"/></svg></button>
                <button aria-label="Сцена"><svg class="icon"><use href="#i-scene"/></svg><i class="caret"></i></button>
                <button aria-label="Настройки вида"><svg class="icon"><use href="#i-screen"/></svg><i class="caret"></i></button>
            </div>
            <div class="doc-controls">
                <button aria-label="Панель слева"><svg class="icon"><use href="#i-padl"/></svg></button>
                <button aria-label="Панель справа"><svg class="icon"><use href="#i-padr"/></svg></button>
                <button aria-label="Свернуть документ"><svg class="icon"><use href="#i-min"/></svg></button>
                <button aria-label="Развернуть документ"><svg class="icon"><use href="#i-restore"/></svg></button>
                <button aria-label="Закрыть документ"><svg class="icon"><use href="#i-close"/></svg></button>
            </div>
            <div class="task-pane">
                <button aria-label="Ресурсы"><svg class="icon"><use href="#i-home"/></svg></button>
                <button aria-label="Библиотека"><svg class="icon"><use href="#i-books"/></svg></button>
                <button aria-label="Проводник"><svg class="icon"><use href="#i-dir"/></svg></button>
                <button aria-label="Палитра видов"><svg class="icon"><use href="#i-palette"/></svg></button>
                <button class="active" aria-label="Внешние виды"><svg class="icon"><use href="#i-ball"/></svg></button>
                <button aria-label="Свойства"><svg class="icon"><use href="#i-list"/></svg></button>
                <button aria-label="Форум"><svg class="icon"><use href="#i-chat"/></svg></button>
            </div>
            <button class="splitter" aria-label="Скрыть панель"><i class="dot"></i></button>
            <button class="spin" aria-label="Повернуть вид"><svg viewBox="0 0 20 20" width="28" height="28"><use href="#i-rotate"/></svg></button>
        </section>
    </main>

    <nav class="sheets">
        <div class="sheet-nav">
            <button aria-label="В начало">|◂</button>
            <button aria-label="Назад">◂</button>
            <button aria-label="Вперед">▸</button>
            <button aria-label="В конец">▸|</button>
        </div>
        <button class="sheet active">Модель</button>
        <button class="sheet">Трехмерные виды</button>
        <button class="sheet wide">Исследование движения 1</button>
    </nav>

    <footer class="status">
        <span class="version">SOLIDWORKS Premium 2018 SP4.0</span>
        <span class="cell">Редактируется Деталь</span>
        <span class="units">ММГС<i class="caret up"></i></span>
        <svg class="icon small"><use href="#i-chip"/></svg>
    </footer>

    <div class="watermark" aria-hidden="true">莫西网<span>www.3dmox.com</span></div>

</body>
</html>
```
FILE: styles.css
```css
* { box-sizing: border-box; }
body { margin: 0; height: 100vh; display: flex; flex-direction: column; overflow: hidden; position: relative; background: #f7f7f7; color: #1a1a1a; font: 12px/13px Roboto, "Noto Sans", sans-serif; }
button { margin: 0; padding: 0; border: 0; background: none; color: inherit; font: inherit; white-space: nowrap; }
a { color: inherit; text-decoration: none; }
input { min-width: 0; border: 0; background: none; font: inherit; outline: none; }
.sprite { position: absolute; width: 0; height: 0; }
.icon { width: 20px; height: 20px; flex: none; }
.icon.small { width: 18px; height: 18px; }
.icon.tiny { width: 16px; height: 16px; }
.caret { width: 0; height: 0; border: 3px solid transparent; border-top: 4px solid #333; border-bottom: 0; flex: none; }
.caret.up { border-top: 0; border-bottom: 4px solid #333; }
.dot { width: 6px; height: 6px; border: 2px solid #aaa; border-radius: 50%; }

/* title bar */
.titlebar { height: 31px; flex: none; display: flex; align-items: center; border-bottom: 1px solid #808080; position: relative; font: 11px/13px "Noto Sans", sans-serif; }
.logo { width: 144px; height: 34px; margin: 0 0 0 10px; padding: 4px 0 0 3px; display: flex; align-items: center; align-self: flex-start; flex: none; border: 1px solid #bbb; border-top: 0; background: linear-gradient(90deg, #fff 60%, #e2e2e2); color: #d0302c; font: italic 15px "Liberation Sans", sans-serif; }
.logo-mark { width: 34px; height: 28px; }
.menu { display: flex; gap: 16px; margin-left: 27px; }
.pin { margin-left: 24px; display: flex; }
.quick { display: flex; align-items: center; height: 30px; margin-left: 7px; padding-left: 16px; border-left: 1px solid #808080; gap: 6px; }
.quick button { display: flex; align-items: center; gap: 7px; padding: 0; }
.quick .picked { height: 26px; margin: 0 -3px; padding: 0 4px 0 0; border: 1px solid #999; background: linear-gradient(90deg, #b4b4b4 25px, #f7f7f7 25px); }
.doc-title { position: absolute; left: 60%; margin: 0; font-size: 11px; font-weight: 400; white-space: nowrap; }
.title-right { display: flex; align-items: center; gap: 5px; margin-left: auto; color: #333; }
.title-right button { display: flex; align-items: center; }
.search { display: flex; align-items: center; gap: 6px; width: 248px; height: 23px; margin-right: 3px; padding: 0 4px; border: 1px solid #111; background: #ebebf2; }
.search input { flex: 1; }
.title-right .help { gap: 11px; padding: 0 5px; font-size: 18px; font-weight: 700; }

/* command ribbon */
.ribbon { height: 87px; flex: none; display: flex; gap: 10px; padding: 6px 11px 2px; border-bottom: 1px solid #808080; font: 11px/13px "Noto Sans", sans-serif; }
.ribbon hr { width: 1px; height: 78px; margin: 0 -3px 0 1px; border: 0; background: #ccc; }
.big { display: flex; flex-direction: column; align-items: center; gap: 2px; height: 79px; padding-top: 4px; text-align: center; position: relative; }
.big.low { padding-top: 11px; }
.big .caret { position: absolute; left: 50%; bottom: 9px; margin-left: -3px; }
.big.pressed { width: 47px; border: 1px solid #777; background: #b0b0b0; }
.stack { display: flex; flex-direction: column; gap: 6px; padding-top: 2px; }
.stack button { display: flex; align-items: center; gap: 6px; height: 20px; }

/* workspace */
.workspace { flex: 1; min-height: 0; display: grid; grid-template: 22px 1fr / 287px 1fr; background: #fff; }
.tabs { grid-area: 1 / 1 / 2 / 3; z-index: 2; justify-self: start; display: flex; color: #333; }
.tabs button { padding: 0 7px; border: 1px solid #808080; border-width: 0 1px 1px 0; background: #d4d4d4; }
.tabs .active { padding: 0 8px; border-bottom: 0; background: #f7f7f7; font-weight: 600; }
.panel { grid-area: 2 / 1; min-height: 0; display: flex; flex-direction: column; border-left: 1px solid #aaa; border-right: 1px solid #808080; background: #f7f7f7; overflow: hidden; }
.grip { height: 16px; margin: 4px 2px 4px 0; display: flex; align-items: center; justify-content: center; border: 1px solid #ccc; border-width: 1px 0; flex: none; }
.panel-tabs { display: flex; height: 26px; flex: none; border-bottom: 1px solid #bbb; padding-left: 1px; }
.panel-tabs button { width: 40px; display: flex; align-items: center; justify-content: center; border: 1px solid #888; border-width: 1px 1px 0 0; background: #d0d0d0; }
.panel-tabs .active { background: #f7f7f7; }
.panel-tabs .more { width: 24px; margin-left: auto; border: 0; background: none; }
.filter { display: flex; align-items: center; height: 26px; flex: none; margin: 0 4px; padding-left: 2px; border: 1px solid #ccc; }
.filter input { flex: 1; }
.root { height: 22px; flex: none; display: flex; align-items: center; gap: 4px; margin-right: 2px; padding-left: 3px; border: 1px solid #5a9bc8; border-width: 1px 0; background: #a6cbe6; white-space: nowrap; overflow: hidden; }
.tree { margin: 0; padding: 1px 0 0; list-style: none; }
.tree li { display: flex; align-items: center; gap: 5px; height: 22px; }
.tree li i { width: 12px; height: 8px; margin-left: 9px; }
.tree li.sub { padding-left: 23px; }
.tree .arrow::before { content: ""; display: block; width: 0; height: 0; border: 4px solid transparent; border-left: 5px solid #666; border-right: 0; }
.tree .arrow.open::before { margin-left: -2px; border: 4px solid transparent; border-top: 5px solid #666; border-bottom: 0; }
.rollback { height: 4px; flex: none; margin-right: 2px; background: #3c8cba; }
.hscroll { display: flex; align-items: center; gap: 5px; height: 16px; margin: auto 2px 5px 0; padding: 0 3px 0 4px; }
.track { flex: 1; height: 15px; background: #ececec; }
.thumb { width: 47%; height: 15px; background: #cdcdcd; }

.viewport { grid-area: 1 / 2 / 3 / 3; position: relative; min-height: 0; overflow: visible; }
.model { position: absolute; inset: 0; width: 100%; height: 100%; }
.triad text { font: 13px "Liberation Serif", serif; }
.view-tools { position: absolute; top: 5px; left: 0; right: 0; display: flex; justify-content: center; gap: 6px; }
.view-tools button { display: flex; align-items: center; gap: 7px; }
.view-tools .caret { border-top-color: #999; }
.doc-controls { position: absolute; top: 5px; right: 6px; display: flex; gap: 6px; color: #999; }
.doc-controls button { display: flex; }
.task-pane { position: absolute; top: 76px; right: 0; width: 22px; border: 1px solid #777; border-width: 1px 0 0 1px; }
.task-pane button { display: flex; align-items: center; width: 21px; height: 24px; padding-left: 2px; border-bottom: 1px solid #777; background: #ccc; overflow: hidden; }
.task-pane .active { background: #fff; }
.splitter { position: absolute; top: 424px; left: -1px; width: 9px; height: 39px; display: flex; align-items: center; border: 1px solid #888; border-left: 0; background: #f7f7f7; }
.spin { position: absolute; right: 2px; bottom: 5px; width: 29px; height: 29px; border-radius: 4px; background: #555; }

/* bottom tabs and status */
.sheets { height: 16px; flex: none; display: flex; padding-left: 27px; border-top: 1px solid #808080; border-bottom: 1px solid #808080; }
.sheet-nav { display: flex; }
.sheet-nav button { width: 16px; border-right: 1px solid #ccc; background: #a8a8a8; color: #888; font-size: 8px; }
.sheet { padding: 0 11px; border-right: 1px solid #808080; background: #d4d4d4; }
.sheet.active { background: #f7f7f7; font-weight: 700; }
.sheet.wide { padding: 0 18px 0 12px; }
.status { height: 14px; flex: none; display: flex; overflow: hidden; padding-left: 1px; line-height: 20px; }
.version { margin-right: auto; }
.cell { padding: 0 6px 0 3px; border: 1px solid #ccc; border-width: 0 1px; margin-right: 16px; }
.units { display: flex; gap: 30px; padding-left: 46px; border-left: 1px solid #ccc; margin-right: 60px; }
.units .caret { margin-top: 8px; }

.watermark { position: absolute; top: -1px; left: 0; font: 74px/76px "Noto Sans CJK SC", sans-serif; color: transparent; -webkit-text-stroke: 1px #aaa; white-space: nowrap; pointer-events: none; }
.watermark span { font: 59px/76px "Liberation Mono", monospace; }
```
